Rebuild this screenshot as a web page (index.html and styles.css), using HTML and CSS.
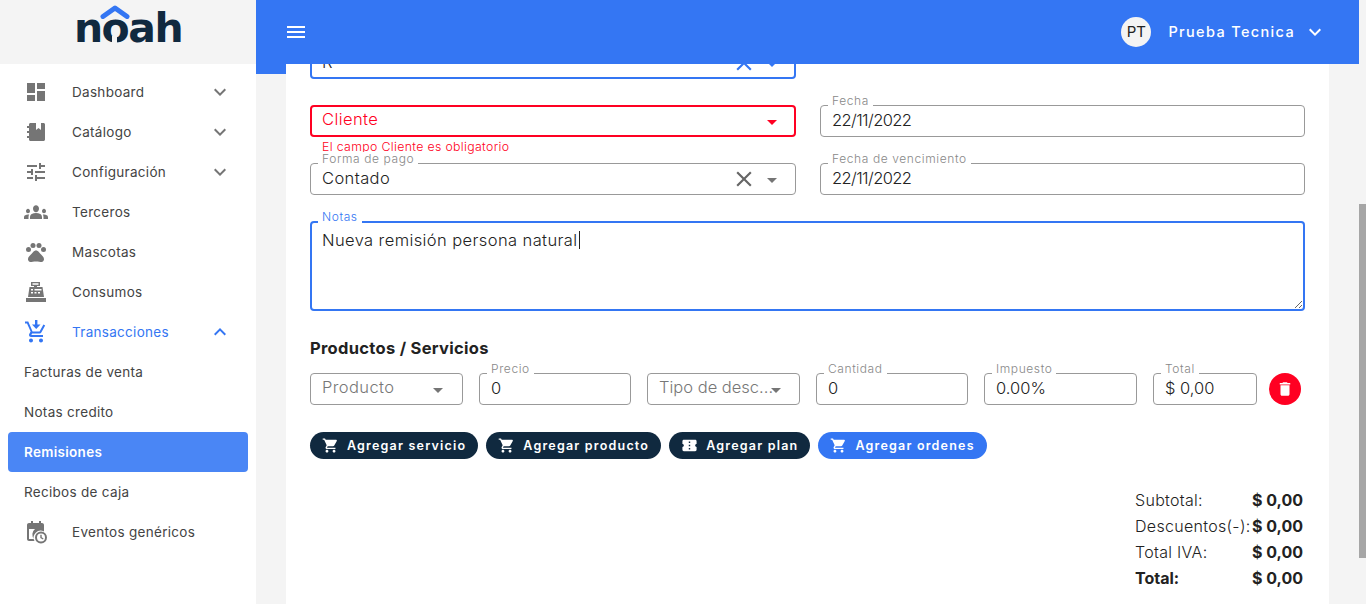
FILE: index.html
```html
<!DOCTYPE html>
<html lang="es">
<head>
    <meta charset="UTF-8">
    <title>Remisiones</title>
    <link rel="stylesheet" href="styles.css">
</head>
<body>
    <svg class="defs" width="0" height="0">
        <symbol id="chev" viewBox="0 0 24 24"><path d="M7.41 8.59L12 13.17l4.59-4.58L18 10l-6 6-6-6z"/></symbol>
        <symbol id="chevup" viewBox="0 0 24 24"><path d="M7.41 15.41L12 10.83l4.59 4.58L18 14l-6-6-6 6z"/></symbol>
        <symbol id="cart" viewBox="0 0 24 24"><path d="M7 18c-1.1 0-1.99.9-1.99 2S5.9 22 7 22s2-.9 2-2-.9-2-2-2zM1 2v2h2l3.6 7.59-1.35 2.45c-.16.28-.25.62-.25.96 0 1.1.9 2 2 2h12v-2H7.42c-.14 0-.25-.11-.25-.25l.03-.12.9-1.63h7.45c.75 0 1.41-.41 1.75-1.03l3.58-6.49c.08-.14.12-.31.12-.48 0-.55-.45-1-1-1H5.21l-.94-2H1zm16 16c-1.1 0-1.99.9-1.99 2s.89 2 1.99 2 2-.9 2-2-.9-2-2-2z"/></symbol>
        <symbol id="close" viewBox="0 0 24 24"><path d="M19 6.41L17.59 5 12 10.59 6.41 5 5 6.41 10.59 12 5 17.59 6.41 19 12 13.41 17.59 19 19 17.59 13.41 12z"/></symbol>
    </svg>

    <div class="app">
        <aside class="sidebar">
            <div class="logo">
                <span class="logo-text">noah</span>
                <span class="logo-notch"></span>
                <svg class="logo-roof" viewBox="0 0 30 14"><path d="M3 11.5L15 3l12 8.5" fill="none" stroke="#3476f3" stroke-width="5" stroke-linecap="round" stroke-linejoin="round"/></svg>
            </div>
            <nav class="nav">
                <a class="nav-item"><svg class="nav-icon" viewBox="0 0 24 24"><path d="M3 13h8V3H3v10zm0 8h8v-6H3v6zm10 0h8V11h-8v10zm0-18v6h8V3h-8z"/></svg><span>Dashboard</span><svg class="nav-chev"><use href="#chev"/></svg></a>
                <a class="nav-item"><svg class="nav-icon" viewBox="0 0 24 24"><path d="M5 4.5C5 3.7 5.7 3 6.5 3H12v7l2.5-2 2.5 2V3h2.5C20.3 3 21 3.700 21 4.500v15c0 .8-.7 1.500-1.500 1.500h-13C5.700 21 5 20.300 5 19.500V4.500z"/><path d="M3 6h3v2H3zM3 11h3v2H3zM3 16h3v2H3z"/></svg><span>Catálogo</span><svg class="nav-chev"><use href="#chev"/></svg></a>
                <a class="nav-item"><svg class="nav-icon" viewBox="0 0 24 24"><path d="M3 17v2h6v-2H3zM3 5v2h10V5H3zm10 16v-2h8v-2h-8v-2h-2v6h2zM7 9v2H3v2h4v2h2V9H7zm14 4v-2H11v2h10zm-6-4h2V7h4V5h-4V3h-2v6z"/></svg><span>Configuración</span><svg class="nav-chev"><use href="#chev"/></svg></a>
                <a class="nav-item"><svg class="nav-icon" viewBox="0 0 24 24"><path transform="translate(0 -1.6) scale(1 1.15)" d="M12 12.750c1.630 0 3.070.390 4.240.900 1.080.480 1.760 1.560 1.760 2.730V18H6v-1.610c0-1.180.680-2.260 1.760-2.730 1.170-.520 2.610-.910 4.240-.910zM4 13c1.100 0 2-.900 2-2s-.900-2-2-2-2 .900-2 2 .900 2 2 2zm1.130 1.100c-.370-.060-.740-.100-1.130-.100-.990 0-1.930.210-2.780.580C.480 14.900 0 15.620 0 16.430V18h4.500v-1.610c0-.830.230-1.610.630-2.290zM20 13c1.100 0 2-.900 2-2s-.900-2-2-2-2 .900-2 2 .900 2 2 2zm4 3.430c0-.810-.480-1.530-1.220-1.850-.850-.370-1.790-.580-2.780-.580-.390 0-.760.040-1.130.100.400.680.630 1.460.630 2.290V18H24v-1.570zM12 6c1.660 0 3 1.340 3 3s-1.340 3-3 3-3-1.340-3-3 1.340-3 3-3z"/></svg><span>Terceros</span></a>
                <a class="nav-item"><svg class="nav-icon" viewBox="0 0 24 24"><circle cx="4.500" cy="9.500" r="2.500"/><circle cx="9" cy="5.500" r="2.500"/><circle cx="15" cy="5.500" r="2.500"/><circle cx="19.500" cy="9.500" r="2.500"/><path d="M17.340 14.860c-.870-1.020-1.600-1.890-2.480-2.910-.460-.540-1.050-1.080-1.750-1.320-.110-.040-.220-.070-.330-.090-.250-.040-.520-.040-.780-.040s-.530 0-.790.050c-.110.020-.220.050-.330.090-.700.240-1.280.780-1.750 1.320-.870 1.020-1.600 1.890-2.480 2.910-1.310 1.310-2.920 2.760-2.620 4.790.290 1.020 1.020 2.030 2.330 2.320.730.150 3.060-.440 5.540-.440h.180c2.480 0 4.810.580 5.540.440 1.310-.290 2.040-1.310 2.330-2.320.310-2.040-1.300-3.490-2.610-4.800z"/></svg><span>Mascotas</span></a>
                <a class="nav-item"><svg class="nav-icon" viewBox="0 0 24 24"><path fill-rule="evenodd" d="M7 2h9v4h-3v1h5.500l1.500 10H4L5.500 7H10V6H7V2zm1.500 1.200v1.600h6V3.200h-6zM7 9v1.500h2V9H7zm3.500 0v1.500h7V9h-7zM7 12v1.500h2V12H7zm3.500 0v1.500h2V12h-2zm3.500 0v1.500h2V12h-2zM2 18h20v4H2v-4z"/></svg><span>Consumos</span></a>
                <a class="nav-item active"><svg class="nav-icon" viewBox="0 0 24 24"><path d="M7 18.500c-1.100 0-1.990.900-1.990 2s.890 2 1.990 2 2-.900 2-2-.900-2-2-2zm10 0c-1.100 0-1.990.900-1.990 2s.890 2 1.990 2 2-.900 2-2-.900-2-2-2zm-9.830-3.250l.030-.120.900-1.630h7.450c.750 0 1.410-.410 1.750-1.030l3.860-7.010-1.740-.960-3.860 7h-7.020L4.270 1.500H1v2h2l3.600 8.090-1.350 2.450c-.160.280-.250.610-.250.960 0 1.100.900 2 2 2h12v-2H7.420c-.130 0-.250-.110-.250-.250z"/><path d="M11 0h2.400v4.500H16.500L12.200 9 8 4.500h3z"/></svg><span>Transacciones</span><svg class="nav-chev"><use href="#chevup"/></svg></a>
                <a class="nav-sub">Facturas de venta</a>
                <a class="nav-sub">Notas credito</a>
                <a class="nav-sub current">Remisiones</a>
                <a class="nav-sub">Recibos de caja</a>
                <a class="nav-item"><svg class="nav-icon" viewBox="0 0 24 24"><path d="M7 1h2v2h6V1h2v2h1c1.100 0 2 .900 2 2v6.500a7 7 0 0 0-9.500 9.500H5c-1.100 0-2-.900-2-2V5c0-1.100.900-2 2-2h2V1zM5 9v10h5a7 7 0 0 1 1-10H5z"/><path fill-rule="evenodd" d="M17 11.500a6 6 0 1 1 0 12 6 6 0 0 1 0-12zm0 2a4 4 0 1 0 0 8 4 4 0 0 0 0-8zm-.7 1.200h1.400v2.600l1.900 1.100-.7 1.200-2.600-1.500v-3.400z"/></svg><span>Eventos genéricos</span></a>
            </nav>
        </aside>

        <div class="main">
            <header class="topbar">
                <button class="menu-btn"><span></span><span></span><span></span></button>
                <div class="user">
                    <span class="avatar">PT</span>
                    <span class="user-name">Prueba Tecnica</span>
                    <svg class="user-chev"><use href="#chev"/></svg>
                </div>
            </header>

            <div class="content">
                <div class="card">
                    <div class="form-grid">
                        <div class="field focused">
                            <span class="value">R</span>
                            <svg class="field-x"><use href="#close"/></svg>
                            <span class="arrow"></span>
                        </div>
                        <div></div>

                        <div class="field-wrap">
                            <div class="field error">
                                <span class="value">Cliente</span>
                                <span class="arrow"></span>
                            </div>
                            <p class="error-text">El campo Cliente es obligatorio</p>
                        </div>
                        <div class="field">
                            <label>Fecha</label>
                            <span class="value date">22/11/2022</span>
                        </div>

                        <div class="field">
                            <label>Forma de pago</label>
                            <span class="value">Contado</span>
                            <svg class="field-x"><use href="#close"/></svg>
                            <span class="arrow"></span>
                        </div>
                        <div class="field">
                            <label>Fecha de vencimiento</label>
                            <span class="value date">22/11/2022</span>
                        </div>
                    </div>

                    <div class="notes-wrap">
                        <label>Notas</label>
                        <div class="notes">Nueva remisión persona natural<span class="caret"></span></div>
                    </div>

                    <h2 class="section-title">Productos / Servicios</h2>

                    <div class="product-row">
                        <div class="field">
                            <span class="value placeholder">Producto</span>
                            <span class="arrow"></span>
                        </div>
                        <div class="field">
                            <label>Precio</label>
                            <span class="value num">0</span>
                        </div>
                        <div class="field">
                            <span class="value placeholder tight">Tipo de desc...</span>
                            <span class="arrow"></span>
                        </div>
                        <div class="field">
                            <label>Cantidad</label>
                            <span class="value num">0</span>
                        </div>
                        <div class="field">
                            <label>Impuesto</label>
                            <span class="value num">0.00%</span>
                        </div>
                        <div class="field">
                            <label>Total</label>
                            <span class="value num">$ 0,00</span>
                        </div>
                        <button class="delete-btn"><svg viewBox="0 0 24 24"><path d="M6 19c0 1.100.900 2 2 2h8c1.100 0 2-.900 2-2V7H6v12zM19 4h-3.500l-1-1h-5l-1 1H5v2h14V4z"/></svg></button>
                    </div>

                    <div class="actions">
                        <button class="pill"><svg><use href="#cart"/></svg>Agregar servicio</button>
                        <button class="pill"><svg><use href="#cart"/></svg>Agregar producto</button>
                        <button class="pill"><svg viewBox="0 0 24 24"><path d="M22 10V6c0-1.110-.900-2-2-2H4c-1.100 0-1.990.890-1.990 2v4c1.100 0 1.990.900 1.990 2s-.890 2-2 2v4c0 1.100.900 2 2 2h16c1.100 0 2-.900 2-2v-4c-1.100 0-2-.900-2-2s.900-2 2-2zm-9 7.500h-2v-2h2v2zm0-4.500h-2v-2h2v2zm0-4.500h-2v-2h2v2z"/></svg>Agregar plan</button>
                        <button class="pill blue"><svg><use href="#cart"/></svg>Agregar ordenes</button>
                    </div>

                    <div class="totals">
                        <span>Subtotal:</span><b>$ 0,00</b>
                        <span>Descuentos(-):</span><b>$ 0,00</b>
                        <span>Total IVA:</span><b>$ 0,00</b>
                        <b class="total-label">Total:</b><b>$ 0,00</b>
                    </div>
                </div>
            </div>
        </div>

        <div class="scrollbar"><div class="thumb"></div></div>
    </div>
</body>
</html>
```

FILE: styles.css
```css
* {
    box-sizing: border-box;
}
html, body {
    height: 100%;
}
body {
    margin: 0;
    font-family: Inter, "Open Sans", sans-serif;
    color: #222;
    background-color: #f4f4f4;
    overflow: hidden;
}
.defs {
    position: absolute;
}
.app {
    display: flex;
    height: 100vh;
}

/* sidebar */
.sidebar {
    width: 256px;
    flex-shrink: 0;
    background-color: #fff;
}
.logo {
    position: relative;
    height: 64px;
    background-color: #f4f4f4;
    display: flex;
    justify-content: center;
}
.logo-text {
    font-family: "DejaVu Sans", sans-serif;
    font-size: 41px;
    line-height: 56px;
    font-weight: 700;
    letter-spacing: -1.500px;
    color: #10293f;
}
.logo-notch {
    position: absolute;
    left: 112px;
    top: 36px;
    width: 5px;
    height: 10px;
    background-color: #f4f4f4;
}
.logo-roof {
    position: absolute;
    left: 100px;
    top: 5px;
    width: 30px;
    height: 14px;
}
.nav {
    padding-top: 8px;
}
.nav-item,
.nav-sub {
    display: flex;
    align-items: center;
    height: 40px;
    font-size: 13.500px;
    letter-spacing: 0.300px;
    color: #444;
}
.nav-item {
    padding: 0 24px;
}
.nav-icon {
    width: 24px;
    height: 24px;
    margin-right: 24px;
    fill: #757575;
    flex-shrink: 0;
}
.nav-chev {
    width: 24px;
    height: 24px;
    margin-left: auto;
    fill: #757575;
}
.nav-item.active {
    color: #3476f3;
}
.nav-item.active .nav-icon,
.nav-item.active .nav-chev {
    fill: #3476f3;
}
.nav-sub {
    margin: 0 8px;
    padding-left: 16px;
    border-radius: 4px;
}
.nav-sub.current {
    background-color: #4a86f5;
    color: #fff;
    font-weight: 600;
}

/* top bar */
.main {
    flex: 1;
    min-width: 0;
    display: flex;
    flex-direction: column;
}
.topbar {
    height: 64px;
    flex-shrink: 0;
    display: flex;
    align-items: center;
    justify-content: space-between;
    padding: 0 32px 0 31px;
    background-color: #3476f3;
    color: #fff;
}
.menu-btn {
    display: flex;
    flex-direction: column;
    gap: 3px;
    width: 18px;
    padding: 0;
    border: none;
    background: none;
}
.menu-btn span {
    display: block;
    height: 2px;
    background-color: #fff;
}
.user {
    display: flex;
    align-items: center;
    margin-top: -1px;
}
.avatar {
    width: 30px;
    height: 30px;
    border-radius: 50%;
    background-color: #f4f4f4;
    color: #222;
    font-size: 15px;
    display: flex;
    align-items: center;
    justify-content: center;
    margin-right: 17px;
}
.user-name {
    font-size: 14.500px;
    font-weight: 500;
    letter-spacing: 1.350px;
}
.user-chev {
    width: 24px;
    height: 24px;
    margin-left: 8px;
    fill: #fff;
}

/* card */
.content {
    flex: 1;
    min-height: 0;
    overflow: hidden;
    padding: 0 30px;
    background: linear-gradient(#3476f3, #3476f3) no-repeat 0 0 / 30px 10px, #f4f4f4;
}
.card {
    height: calc(100% + 17px);
    padding: 0 24px;
    background-color: #fff;
}
.form-grid {
    display: grid;
    grid-template-columns: 486px 485px;
    column-gap: 24px;
    margin-top: -17px;
}
.form-grid > :nth-child(1),
.form-grid > :nth-child(2) {
    margin-bottom: 26px;
}
.form-grid > :nth-child(3),
.form-grid > :nth-child(4) {
    margin-bottom: 26px;
}
.field-wrap {
    position: relative;
}
.field {
    position: relative;
    display: flex;
    align-items: center;
    height: 32px;
    padding: 0 11px;
    border: 1px solid #999;
    border-radius: 4px;
    background-color: #fff;
    font-size: 16.500px;
    font-weight: 300;
}
.field label,
.notes-wrap label {
    position: absolute;
    top: -12px;
    left: 7px;
    padding: 0 4px;
    background-color: #fff;
    color: #888;
    font-size: 12px;
    line-height: 14px;
    font-weight: 300;
    letter-spacing: 0.600px;
}
.value {
    flex: 1;
    min-width: 0;
    padding-bottom: 3px;
    letter-spacing: 0.400px;
    white-space: nowrap;
}
.value.num {
    letter-spacing: 0;
}
.value.date {
    letter-spacing: -0.600px;
}
.value.tight {
    letter-spacing: 0;
}
.placeholder,
.field.error .value {
    padding-bottom: 5px;
}
.placeholder {
    color: #777;
}
.field-x {
    width: 26px;
    height: 26px;
    fill: #666;
    margin-right: 10px;
}
.arrow {
    width: 0;
    height: 0;
    border-left: 5px solid transparent;
    border-right: 5px solid transparent;
    border-top: 5px solid #757575;
    margin-right: 7px;
    margin-top: 2px;
}
.field.focused {
    border: 2px solid #3476f3;
    padding: 0 10px;
}
.field.focused .field-x {
    fill: #3476f3;
}
.field.focused .arrow {
    border-top-color: #3476f3;
}
.field.error {
    border: 2px solid #ff0022;
    padding: 0 10px;
    color: #ff0022;
}
.field.error .arrow {
    border-top-color: #ff0022;
}
.error-text {
    position: absolute;
    top: 34px;
    left: 12px;
    margin: 0;
    color: #ff0022;
    font-size: 12.300px;
    line-height: 16px;
    font-weight: 300;
    letter-spacing: 0.350px;
}

/* notas */
.notes-wrap {
    position: relative;
    margin-top: 26px;
}
.notes-wrap label {
    top: -11px;
    left: 8px;
    color: #3476f3;
}
.notes {
    width: 995px;
    height: 90px;
    padding: 6px 10px;
    border: 2px solid #3476f3;
    border-radius: 4px;
    font-size: 16.500px;
    line-height: 22px;
    font-weight: 300;
    letter-spacing: 0.400px;
    resize: both;
    overflow: auto;
}
.caret {
    display: inline-block;
    width: 1px;
    height: 18px;
    margin-left: 1px;
    vertical-align: -3px;
    background-color: #222;
}

/* productos */
.section-title {
    margin: 27px 0 0;
    font-size: 16.500px;
    line-height: 20px;
    font-weight: 700;
    letter-spacing: 0.300px;
    color: #222;
}
.product-row {
    display: grid;
    grid-template-columns: 153px 152px 153px 152px 153px 104px 32px;
    column-gap: 16px;
    margin-top: 15px;
}
.product-row .field {
    padding-right: 9px;
}
.product-row .arrow {
    margin-right: 10px;
}
.product-row > :nth-child(3) .arrow {
    margin-right: 9px;
}
.delete-btn {
    width: 32px;
    height: 32px;
    margin-left: -4px;
    padding: 0;
    border: none;
    border-radius: 50%;
    background-color: #ff0022;
    display: flex;
    align-items: center;
    justify-content: center;
}
.delete-btn svg {
    width: 18px;
    height: 18px;
    fill: #fff;
}
.actions {
    display: flex;
    gap: 8px;
    margin-top: 27px;
}
.pill {
    display: flex;
    align-items: center;
    height: 27px;
    padding: 0 12px;
    border: none;
    border-radius: 14px;
    background-color: #10293f;
    color: #fff;
    font-family: inherit;
    font-size: 12.500px;
    font-weight: 600;
    letter-spacing: 1.200px;
    white-space: nowrap;
}
.pill svg {
    width: 17px;
    height: 17px;
    margin-right: 8px;
    fill: #fff;
}
.pill.blue {
    background-color: #3476f3;
}

/* totales */
.totals {
    display: grid;
    grid-template-columns: 117px 51px;
    justify-content: end;
    grid-auto-rows: 26px;
    align-items: center;
    margin: 28px 2px 0 0;
    font-size: 16px;
    font-weight: 300;
}
.totals span {
    letter-spacing: 0.300px;
    white-space: nowrap;
}
.totals b {
    font-weight: 700;
    white-space: nowrap;
}
.totals .total-label {
    font-weight: 700;
}

/* scroll */
.scrollbar {
    width: 7px;
    flex-shrink: 0;
    padding-top: 204px;
}
.thumb {
    height: 354px;
    background-color: #a6a6a6;
}
```
